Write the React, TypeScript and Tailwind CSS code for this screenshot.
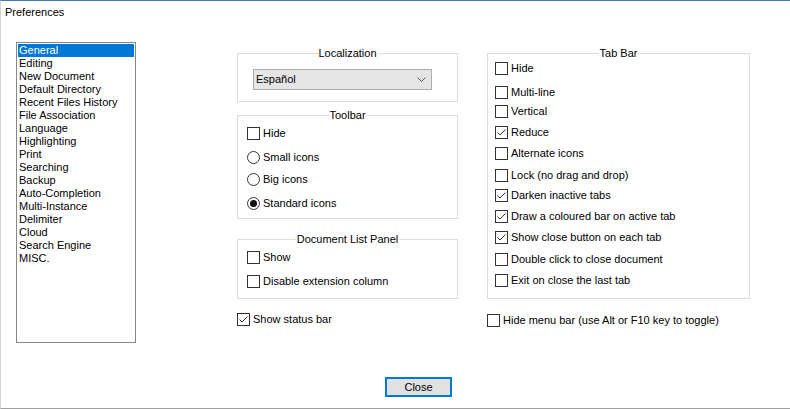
import React from 'react';

const categories = [
  'General',
  'Editing',
  'New Document',
  'Default Directory',
  'Recent Files History',
  'File Association',
  'Language',
  'Highlighting',
  'Print',
  'Searching',
  'Backup',
  'Auto-Completion',
  'Multi-Instance',
  'Delimiter',
  'Cloud',
  'Search Engine',
  'MISC.',
];

const tabBarOptions: { label: string; checked: boolean; mt: string }[] = [
  { label: 'Hide', checked: false, mt: 'mt-[8px]' },
  { label: 'Multi-line', checked: false, mt: 'mt-[11px]' },
  { label: 'Vertical', checked: false, mt: 'mt-[6px]' },
  { label: 'Reduce', checked: true, mt: 'mt-[8px]' },
  { label: 'Alternate icons', checked: false, mt: 'mt-[8px]' },
  { label: 'Lock (no drag and drop)', checked: false, mt: 'mt-[9px]' },
  { label: 'Darken inactive tabs', checked: true, mt: 'mt-[7px]' },
  { label: 'Draw a coloured bar on active tab', checked: true, mt: 'mt-[8px]' },
  { label: 'Show close button on each tab', checked: true, mt: 'mt-[8px]' },
  { label: 'Double click to close document', checked: false, mt: 'mt-[9px]' },
  { label: 'Exit on close the last tab', checked: false, mt: 'mt-[8px]' },
];

const Checkbox: React.FC<{ label: string; checked?: boolean; className?: string }> = ({ label, checked, className = '' }) => (
  <div className={`flex items-center h-[13px] ${className}`}>
    <div className="w-[13px] h-[13px] border border-[#333333] bg-white shrink-0">
      {checked && (
        <svg width="11" height="11" viewBox="0 0 11 11">
          <polyline points="1.5,5.5 4,8 9.5,2.5" fill="none" stroke="#333333" strokeWidth="1" />
        </svg>
      )}
    </div>
    <span className="ml-[3px] whitespace-nowrap leading-[13px]">{label}</span>
  </div>
);

const Radio: React.FC<{ label: string; checked?: boolean; className?: string }> = ({ label, checked, className = '' }) => (
  <div className={`flex items-center h-[13px] ${className}`}>
    <div className="w-[13px] h-[13px] rounded-full border border-[#333333] bg-white shrink-0 flex items-center justify-center">
      {checked && <div className="w-[7px] h-[7px] rounded-full bg-[#111111]" />}
    </div>
    <span className="ml-[3px] whitespace-nowrap leading-[13px]">{label}</span>
  </div>
);

const Group: React.FC<{ title: string; className?: string; children?: React.ReactNode }> = ({ title, className = '', children }) => (
  <div className={`relative border border-[#dcdcdc] ${className}`}>
    <span className="absolute left-1/2 -translate-x-1/2 -top-[7px] bg-white px-[1px] leading-[13px] whitespace-nowrap">
      {title}
    </span>
    {children}
  </div>
);

const App: React.FC = () => {
  return (
    <div className="w-[790px] h-[409px] bg-white border-t border-t-[#3b7db3] border-l border-l-[#d4d4d4] border-b border-b-[#a0a0a0] flex flex-col text-[11px] leading-[13px] text-black font-['Liberation_Sans',Arial,sans-serif] overflow-hidden">
      {/* title */}
      <div className="pl-[4px] pt-[5px] leading-[13px]">Preferences</div>

      <div className="flex items-start pl-[15px] mt-[23px]">
        {/* category list */}
        <div className="w-[120px] h-[301px] border border-[#828790] p-[1px] shrink-0">
          {categories.map((c, i) => (
            <div
              key={c}
              className={`h-[13px] leading-[13px] pl-[1px] whitespace-nowrap ${i === 0 ? 'bg-[#0078d7] text-white' : ''}`}
            >
              {c}
            </div>
          ))}
        </div>

        {/* middle column */}
        <div className="ml-[101px] w-[221px] mt-[11px] flex flex-col shrink-0">
          <Group title="Localization" className="h-[49px]">
            <div className="ml-[15px] mt-[15px] w-[179px] h-[21px] bg-[#e5e5e5] border border-[#acacac] flex items-center justify-between pl-[2px] pr-[5px]">
              <span className="leading-[13px]">Español</span>
              <svg width="9" height="5" viewBox="0 0 9 5">
                <polyline points="0.5,0.5 4.5,4.5 8.5,0.5" fill="none" stroke="#555555" strokeWidth="1" />
              </svg>
            </div>
          </Group>

          <Group title="Toolbar" className="mt-[13px] h-[104px] pl-[9px] pt-[11px]">
            <Checkbox label="Hide" />
            <Radio label="Small icons" className="mt-[11px]" />
            <Radio label="Big icons" className="mt-[9px]" />
            <Radio label="Standard icons" checked className="mt-[11px]" />
          </Group>

          <Group title="Document List Panel" className="mt-[20px] h-[60px] pl-[9px] pt-[11px]">
            <Checkbox label="Show" />
            <Checkbox label="Disable extension column" className="mt-[11px]" />
          </Group>

          <Checkbox label="Show status bar" checked className="mt-[14px]" />
        </div>

        {/* right column */}
        <div className="ml-[29px] w-[263px] mt-[11px] flex flex-col shrink-0">
          <Group title="Tab Bar" className="h-[246px] pl-[7px]">
            {tabBarOptions.map((o) => (
              <Checkbox key={o.label} label={o.label} checked={o.checked} className={o.mt} />
            ))}
          </Group>

          <Checkbox label="Hide menu bar (use Alt or F10 key to toggle)" className="mt-[15px]" />
        </div>
      </div>

      <div className="mt-[34px] pl-[384px]">
        <button className="w-[67px] h-[20px] border-2 border-[#0078d7] bg-[#e1e1e1] flex items-center justify-center leading-[13px]">
          Close
        </button>
      </div>
    </div>
  );
};

export default App;
